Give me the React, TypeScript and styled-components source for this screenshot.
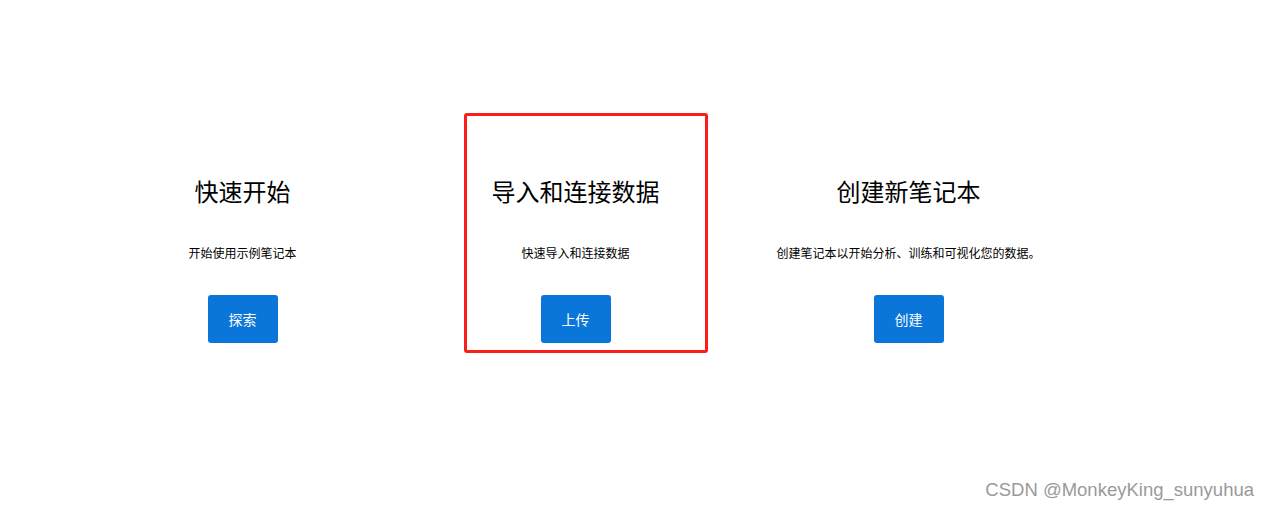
import React from 'react'
import styled, { createGlobalStyle } from 'styled-components'

const GlobalStyle = createGlobalStyle`
  html, body {
    margin: 0;
    padding: 0;
    background: #fff;
  }
  body {
    font-family: "Noto Sans CJK SC", "Noto Sans", sans-serif;
    color: #111;
  }
`

const Page = styled.div`
  position: relative;
  width: 1268px;
  height: 508px;
  overflow: hidden;
`

const Row = styled.div`
  display: grid;
  grid-template-columns: repeat(3, 333px);
  padding: 175px 0 0 76px;
`

const Card = styled.div`
  position: relative;
  display: flex;
  flex-direction: column;
  align-items: center;
`

const Title = styled.h2`
  margin: 0;
  font-size: 24px;
  line-height: 32px;
  font-weight: 400;
  color: #000;
`

const Desc = styled.p`
  margin: 37px 0 0;
  font-size: 12px;
  line-height: 18px;
  color: #000;
`

const Button = styled.button`
  margin-top: 33px;
  width: 70px;
  height: 48px;
  border: none;
  border-radius: 3px;
  background: #0b76d9;
  color: #fff;
  font-family: inherit;
  font-size: 14px;
  cursor: pointer;
`

const Highlight = styled.div`
  position: absolute;
  left: 55px;
  top: -62px;
  width: 238px;
  height: 234px;
  border: 3px solid #fb1d17;
  border-radius: 3px;
  pointer-events: none;
`

const Watermark = styled.div`
  position: absolute;
  right: 14px;
  bottom: 7px;
  font-family: "Liberation Sans", Arial, sans-serif;
  font-size: 18.5px;
  color: #9a9a9a;
`

type CardData = {
  title: string
  desc: string
  action: string
  marked?: boolean
}

const cards: CardData[] = [
  { title: '快速开始', desc: '开始使用示例笔记本', action: '探索' },
  { title: '导入和连接数据', desc: '快速导入和连接数据', action: '上传', marked: true },
  { title: '创建新笔记本', desc: '创建笔记本以开始分析、训练和可视化您的数据。', action: '创建' },
]

const App = () => {
  return (
    <Page>
      <GlobalStyle />
      <Row>
        {cards.map(card => (
          <Card key={card.title}>
            {card.marked && <Highlight />}
            <Title>{card.title}</Title>
            <Desc>{card.desc}</Desc>
            <Button>{card.action}</Button>
          </Card>
        ))}
      </Row>
      <Watermark>CSDN @MonkeyKing_sunyuhua</Watermark>
    </Page>
  )
}

export default App
